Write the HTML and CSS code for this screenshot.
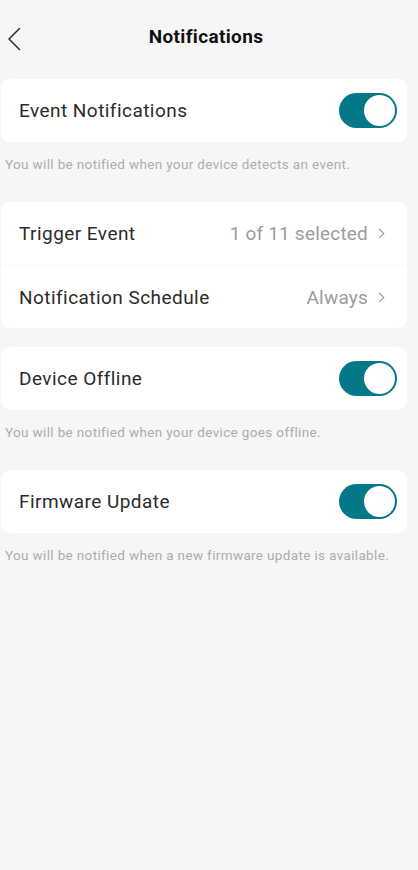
FILE: index.html
```html
<!DOCTYPE html>
<html lang="en">
<head>
<meta charset="utf-8">
<title>Notifications</title>
<link rel="stylesheet" href="styles.css">
</head>
<body>
<div class="page">
  <header class="header">
    <div class="back">
      <svg width="14" height="24" viewBox="0 0 14 24"><path d="M12.5 1.5 L2 12 L12.5 22.5" fill="none" stroke="#333" stroke-width="1.6" stroke-linecap="round" stroke-linejoin="round"/></svg>
    </div>
    <h1 class="title">Notifications</h1>
    <div></div>
  </header>

  <section class="card">
    <div class="row">
      <span class="label">Event Notifications</span>
      <span class="toggle"><span class="knob"></span></span>
    </div>
  </section>
  <p class="hint">You will be notified when your device detects an event.</p>

  <section class="card">
    <div class="row">
      <span class="label">Trigger Event</span>
      <span class="value">1 of 11 selected<svg class="chev" width="7" height="11" viewBox="0 0 7 11"><path d="M1 0.8 L5.8 5.5 L1 10.2" fill="none" stroke="#9a9a9a" stroke-width="1.1"/></svg></span>
    </div>
    <div class="row">
      <span class="label">Notification Schedule</span>
      <span class="value">Always<svg class="chev" width="7" height="11" viewBox="0 0 7 11"><path d="M1 0.8 L5.8 5.5 L1 10.2" fill="none" stroke="#9a9a9a" stroke-width="1.1"/></svg></span>
    </div>
  </section>

  <section class="card spaced">
    <div class="row">
      <span class="label">Device Offline</span>
      <span class="toggle"><span class="knob"></span></span>
    </div>
  </section>
  <p class="hint">You will be notified when your device goes offline.</p>

  <section class="card">
    <div class="row">
      <span class="label">Firmware Update</span>
      <span class="toggle"><span class="knob"></span></span>
    </div>
  </section>
  <p class="hint">You will be notified when a new firmware update is available.</p>
</div>
</body>
</html>
```

FILE: styles.css
```css
html, body {
  margin: 0;
  padding: 0;
  background: #f6f6f6;
}
body {
  font-family: Roboto, "Noto Sans", "Liberation Sans", sans-serif;
  color: #222;
  min-height: 870px;
}
.page {
  width: 418px;
}
.header {
  height: 72px;
  display: grid;
  grid-template-columns: 1fr auto 1fr;
  align-items: center;
}
.back {
  padding-left: 7px;
  padding-top: 5px;
  display: flex;
  align-items: center;
}
.title {
  margin: 0 0 0 -6px;
  font-size: 19px;
  font-weight: 700;
  color: #111;
  letter-spacing: 0.35px;
}
.card {
  margin: 7px 0 0 1px;
  width: 406px;
  background: #fff;
  border-radius: 9px;
}
.card.spaced {
  margin-top: 19px;
}
.row {
  height: 63px;
  display: flex;
  align-items: center;
  justify-content: space-between;
  padding: 0 10px 0 18px;
}
.row + .row {
  border-top: 1px solid #f8f8f8;
  height: 62px;
}
.label {
  font-size: 19px;
  color: #2b2b2b;
  letter-spacing: 0.45px;
}
.value {
  display: flex;
  align-items: center;
  gap: 10px;
  font-size: 19px;
  color: #9c9c9c;
  padding-right: 12px;
  letter-spacing: 0.2px;
}
.chev {
  display: block;
}
.toggle {
  width: 58px;
  height: 35px;
  border-radius: 18px;
  background: #047789;
  display: flex;
  justify-content: flex-end;
  align-items: center;
  padding: 2px;
  box-sizing: border-box;
}
.knob {
  width: 31px;
  height: 31px;
  border-radius: 50%;
  background: #fff;
}
.hint {
  margin: 14px 0 30px 5px;
  font-size: 13.5px;
  line-height: 16px;
  color: #acacac;
  letter-spacing: 0.35px;
}
.hint + .card {
  margin-top: 0;
}
```
